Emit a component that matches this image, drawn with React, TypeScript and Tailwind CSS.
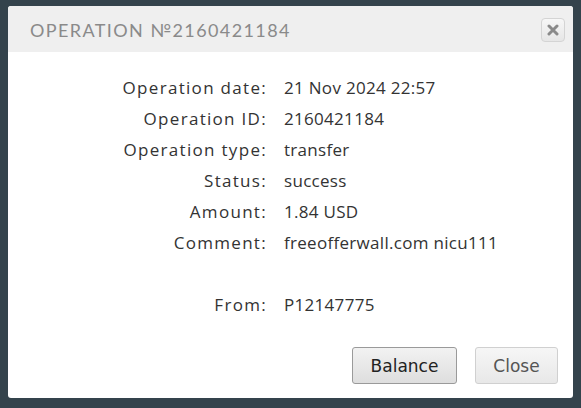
import React from 'react';

const rows: [string, string][] = [
  ['Operation date:', '21 Nov 2024 22:57'],
  ['Operation ID:', '2160421184'],
  ['Operation type:', 'transfer'],
  ['Status:', 'success'],
  ['Amount:', '1.84 USD'],
  ['Comment:', 'freeofferwall.com nicu111'],
  ['', ''],
  ['From:', 'P12147775'],
];

const App = () => {
  return (
    <div className="w-[581px] h-[408px] bg-[#34434c] pt-[6px] pl-[8px] overflow-hidden">
      <div className="w-[565px] h-[392px] bg-white rounded-[3px] flex flex-col overflow-hidden">
        <div className="h-[46px] bg-[#efefef] flex items-center justify-between pl-[22px] pr-[8px] shrink-0">
          <span className="text-[18px] tracking-[1.4px] text-[#8a8a8a] font-['Lato',sans-serif] pt-[2px]">
            OPERATION №2160421184
          </span>
          <button className="w-[24px] h-[24px] rounded-[4px] border border-[#d4d4d4] bg-gradient-to-b from-[#f7f7f7] to-[#e6e6e6] flex items-center justify-center mt-[2px]">
            <svg width="12" height="12" viewBox="0 0 12 12">
              <path d="M2 2 L10 10 M10 2 L2 10" stroke="#8a8a8a" strokeWidth="3" strokeLinecap="round" />
            </svg>
          </button>
        </div>
        <div className="pt-[20px] grid grid-cols-[259px_1fr] font-['Open_Sans',sans-serif] text-[17px] text-[#333]">
          {rows.map(([label, value], i) => (
            <React.Fragment key={i}>
              <div className="h-[31px] leading-[31px] text-right tracking-[1.3px]">{label}</div>
              <div className="h-[31px] leading-[31px] pl-[17px] tracking-[0.3px]">{value}</div>
            </React.Fragment>
          ))}
        </div>
        <div className="flex justify-end gap-[18px] pr-[15px] mt-[27px] font-['DejaVu_Sans',sans-serif] text-[17px]">
          <button className="w-[105px] h-[37px] pt-[3px] rounded-[3px] border border-[#9a9a9a] bg-gradient-to-b from-[#f2f2f2] to-[#dedede] text-[#222]">
            Balance
          </button>
          <button className="w-[83px] h-[37px] pt-[3px] rounded-[3px] border border-[#d0d0d0] bg-gradient-to-b from-[#f6f6f6] to-[#e8e8e8] text-[#555]">
            Close
          </button>
        </div>
      </div>
    </div>
  );
};

export default App;
